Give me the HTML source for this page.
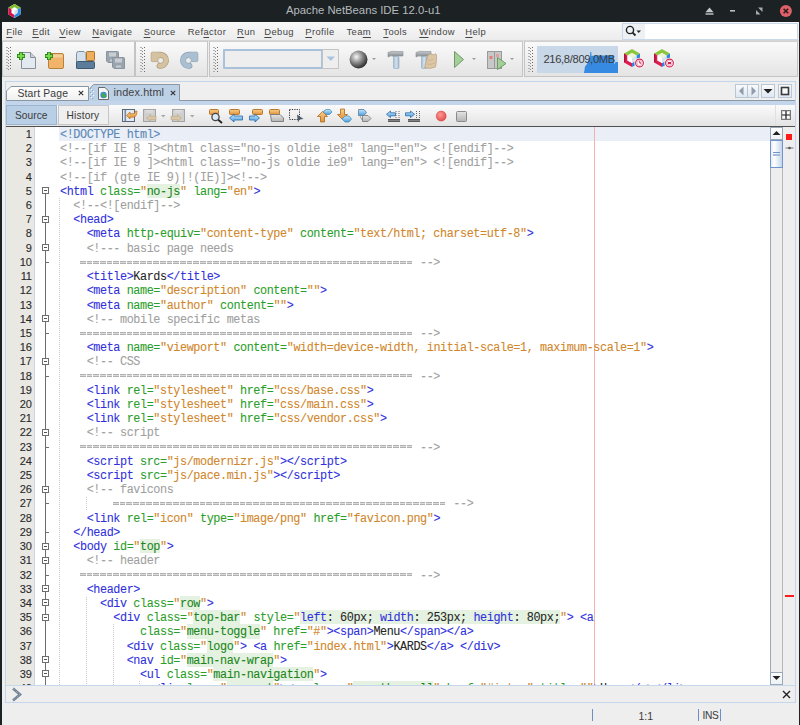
<!DOCTYPE html>
<html><head><meta charset="utf-8">
<style>
*{box-sizing:border-box}
html,body{margin:0;padding:0;width:800px;height:725px;overflow:hidden;background:#1c2124;font-family:"Liberation Sans",sans-serif}
.abs{position:absolute}
#win{position:absolute;left:2px;top:22px;width:797px;height:703px;background:#eeeeee}
#title{position:absolute;left:286px;top:4px;font-size:11.3px;color:#b5babe;white-space:pre;letter-spacing:0}
.menu{position:absolute;top:25.6px;font-size:9.4px;color:#444;white-space:pre;letter-spacing:0.38px}
.menu u{text-decoration:underline;text-decoration-thickness:1px;text-underline-offset:1.5px}
#menubar{position:absolute;left:2px;top:22px;width:797px;height:19px;background:linear-gradient(#f8f8f8,#ececec);border-bottom:1px solid #d6d6d6}
.tbg{position:absolute;top:41px;height:36px;background:linear-gradient(#fafafa,#e4e4e4);border:1px solid #c4c4c4;border-top-color:#d0d0d0}
.grip{position:absolute;width:5px;background-image:radial-gradient(circle at 4.5px 1.5px,#6a6a6a 0.75px,transparent 0.9px),radial-gradient(circle at 2.5px 3px,#8a8a8a 0.75px,transparent 0.9px),radial-gradient(circle at 0.8px 1.5px,#b0b0b0 0.7px,transparent 0.9px);background-size:5px 3px}
#edpanel{position:absolute;left:5px;top:81px;width:791px;height:622px;border:1px solid #c3d5e9;background:#efefef}
.code,.num{position:absolute;font-family:"Liberation Mono",monospace;font-size:11.8px;letter-spacing:-0.413px;white-space:pre;line-height:14px;height:14px}
.ln{position:absolute;left:60px;font-family:"Liberation Mono",monospace;font-size:11.8px;letter-spacing:-0.413px;white-space:pre;line-height:14px;height:14px;-webkit-text-stroke:0.08px;transform:translateY(1px) scaleY(1.04);transform-origin:0 10.25px}
.num{left:6px;width:25.6px;text-align:right;color:#2a2a2a;font-family:"Liberation Sans",sans-serif !important;font-size:11px !important;letter-spacing:-0.25px !important;-webkit-text-stroke:0.1px}
.t{color:#3030dc}
.a{color:#2a9e2a}
.v{color:#d0862a}
.c{color:#a0a0a0}
.k{color:#262626}
.d{color:#5a87b6}
.vh{color:#1a861a}
.ph{color:#3030dc}
.kh{color:#262626}
.hlb{position:absolute;height:14.21px;background:#e5f2e1}
.fb{position:absolute;left:42px;width:7px;height:7px;border:1px solid #6d6d6d;background:#fff}
.fb::after{content:"";position:absolute;left:1px;top:2px;width:3px;height:1px;background:#555}
.tick{position:absolute;left:45px;width:4px;height:1px;background:#6d6d6d}
.guide{position:absolute;width:1px;background-image:linear-gradient(#c8c8c8 50%,transparent 50%);background-size:1px 2px}
.eqb{position:absolute;width:332px;height:3px;background:repeating-linear-gradient(90deg,transparent 0 0.5px,rgba(255,255,255,0) 0.5px 5.5px,#fff 5.5px 6.6667px),linear-gradient(#b0b0b0 0 1px,#dcdcdc 1px 2px,#b0b0b0 2px 3px)}
.ui{position:absolute;font-size:10.5px;color:#3c3c3c;white-space:pre}
</style></head><body>
<!-- title bar -->
<svg class="abs" style="left:7px;top:3px" width="15" height="16" viewBox="0 0 15 16">
 <polygon points="7.5,1 13.5,4.5 13.5,11.5 7.5,15 1.5,11.5 1.5,4.5" fill="#fff"/>
 <polygon points="7.5,1 13.5,4.5 7.5,8 1.5,4.5" fill="#7cbd2e"/>
 <polygon points="1.5,4.5 7.5,8 7.5,15 1.5,11.5" fill="#d8104a"/>
 <polygon points="13.5,4.5 13.5,11.5 7.5,15 7.5,8" fill="#2a8ae2"/>
 <polygon points="7.5,4 10.5,6 10.5,10 7.5,12 4.5,10 4.5,6" fill="#fff"/>
 <polygon points="7.5,8 10.5,6 10.5,10 7.5,12" fill="#d0dce8"/>
</svg>
<div id="title">Apache NetBeans IDE 12.0-u1</div>
<svg class="abs" style="left:700px;top:0" width="100" height="22">
 <polygon points="709.5,7.5 713.5,12.3 705.5,12.3" transform="translate(-700,0)" fill="#c2c8c8"/>
 <rect x="5.5" y="13.3" width="8" height="1.4" fill="#c2c8c8"/>
 <rect x="30" y="10" width="5" height="1.6" fill="#b8bebe"/>
 <polygon points="56,14.5 56,10 60.5,14.5" fill="#a6acac"/>
 <polygon points="62.5,7.5 62.5,12 58,7.5" fill="#a6acac"/>
 <circle cx="85.9" cy="11" r="6" fill="#de6068"/>
 <path d="M83.6,8.7 L88.2,13.3 M88.2,8.7 L83.6,13.3" stroke="#2a1a1c" stroke-width="1.5"/>
</svg>
<div id="win"></div>
<!-- menubar -->
<div id="menubar"></div>
<div class="menu" style="left:6.3px"><u>F</u>ile</div>
<div class="menu" style="left:32.3px"><u>E</u>dit</div>
<div class="menu" style="left:59.3px"><u>V</u>iew</div>
<div class="menu" style="left:92.3px"><u>N</u>avigate</div>
<div class="menu" style="left:143.7px"><u>S</u>ource</div>
<div class="menu" style="left:187.7px">Ref<u>a</u>ctor</div>
<div class="menu" style="left:237.1px"><u>R</u>un</div>
<div class="menu" style="left:264.3px"><u>D</u>ebug</div>
<div class="menu" style="left:305.3px"><u>P</u>rofile</div>
<div class="menu" style="left:346.5px">Tea<u>m</u></div>
<div class="menu" style="left:383.3px"><u>T</u>ools</div>
<div class="menu" style="left:419.3px"><u>W</u>indow</div>
<div class="menu" style="left:465.3px"><u>H</u>elp</div>
<!-- search -->
<div class="abs" style="left:622px;top:23px;width:176px;height:17px;background:#fff;border:1px solid #c9d9ea"></div>
<div class="abs" style="left:623px;top:24px;width:22px;height:15px;background:#eef1f4"></div>
<svg class="abs" style="left:624px;top:24px" width="20" height="15">
 <circle cx="6" cy="6" r="3.6" fill="none" stroke="#222" stroke-width="1.4"/>
 <line x1="8.6" y1="8.6" x2="11.5" y2="11.5" stroke="#222" stroke-width="1.8"/>
 <polygon points="12.5,6.5 17,6.5 14.75,9" fill="#222"/>
</svg>
<!-- toolbar -->
<div class="tbg" style="left:2px;width:133px"></div>
<div class="tbg" style="left:135px;width:73px"></div>
<div class="tbg" style="left:209px;width:314px"></div>
<div class="tbg" style="left:524px;width:274px"></div>
<div class="grip" style="left:6px;top:46px;height:25px"></div>
<div class="grip" style="left:140px;top:46px;height:26px"></div>
<div class="grip" style="left:213px;top:46px;height:26px"></div>
<div class="grip" style="left:528px;top:46px;height:26px"></div>
<svg class="abs" style="left:16px;top:49px" width="115" height="22" viewBox="0 0 115 22">
 <!-- new file -->
 <path d="M5.5,3.5 H14.5 L19.5,8.5 V19.5 H5.5 Z" fill="#e3e9f0" stroke="#8b9098" stroke-width="1"/>
 <path d="M14.5,3.5 V8.5 H19.5" fill="#c9d2dc" stroke="#8b9098" stroke-width="1"/>
 <path d="M5,3 V11 M1,7 H9" stroke="#2a8a1a" stroke-width="4"/>
 <path d="M5,3.8 V10.2 M1.8,7 H8.2" stroke="#7ad84a" stroke-width="2"/>
 <!-- new project -->
 <rect x="32.5" y="4.5" width="15" height="15" rx="1.5" fill="#f1b46a" stroke="#b7803c"/>
 <rect x="33.5" y="5.5" width="13" height="3" fill="#f7cf9a"/>
 <path d="M33,3 V11 M29,7 H37" stroke="#2a8a1a" stroke-width="4"/>
 <path d="M33,3.8 V10.2 M29.8,7 H36.2" stroke="#7ad84a" stroke-width="2"/>
 <!-- open project -->
 <path d="M60.5,19.5 V4.5 Q60.5,2.5 62.5,2.5 H68 L70,4.5 V13 Z" fill="#d4e0ec" stroke="#7f90a2"/>
 <rect x="60.5" y="12.5" width="18" height="7" rx="1" fill="#5c7c9c" stroke="#3e5870"/>
 <rect x="70.5" y="2.5" width="8" height="9" rx="0.8" fill="#eeae5e" stroke="#a8742c"/>
 <!-- save all grayed -->
 <path d="M90.5,2.5 H101.5 Q102.5,2.5 102.5,3.5 V13.5 H92 L90.5,12 Z" fill="#9aa4ae" stroke="#8a949e"/>
 <rect x="93" y="3.5" width="7" height="4" fill="#c9cdd2"/>
 <rect x="94" y="10.5" width="5" height="2" fill="#c9cdd2"/>
 <path d="M96.5,8.5 H107.5 Q108.5,8.5 108.5,9.5 V19.5 H98 L96.5,18 Z" fill="#9aa4ae" stroke="#8a949e"/>
 <rect x="99" y="9.5" width="7" height="4" fill="#c9cdd2"/>
 <rect x="100" y="16.5" width="5" height="2" fill="#c9cdd2"/>
</svg>
<svg class="abs" style="left:148px;top:49px" width="55" height="22" viewBox="0 0 55 22">
 <rect x="3.20" y="3.20" width="9.1" height="9.4" rx="1.2" fill="#d4c2a0" stroke="#ae9a78" stroke-width="0.8"/>
 <path d="M12.50,5.80 A5.5,5.5 0 1 1 11.55,16.72" fill="none" stroke="#ae9a78" stroke-width="6" stroke-linecap="round"/>
 <rect x="3.60" y="3.60" width="8.3" height="8.6" rx="0.8" fill="#d4c2a0"/>
 <path d="M12.50,5.80 A5.5,5.5 0 1 1 11.55,16.72" fill="none" stroke="#d4c2a0" stroke-width="4.6" stroke-linecap="round"/>
 <circle cx="12.60" cy="11.40" r="2.9" fill="#ebebeb" stroke="#ae9a78" stroke-width="0.7"/>
 <rect x="40.70" y="3.20" width="9.1" height="9.4" rx="1.2" fill="#aac0d2" stroke="#8aa0b4" stroke-width="0.8"/>
 <path d="M40.50,5.80 A5.5,5.5 0 1 0 41.45,16.72" fill="none" stroke="#8aa0b4" stroke-width="6" stroke-linecap="round"/>
 <rect x="41.10" y="3.60" width="8.3" height="8.6" rx="0.8" fill="#aac0d2"/>
 <path d="M40.50,5.80 A5.5,5.5 0 1 0 41.45,16.72" fill="none" stroke="#aac0d2" stroke-width="4.6" stroke-linecap="round"/>
 <circle cx="40.40" cy="11.40" r="2.9" fill="#ebebeb" stroke="#8aa0b4" stroke-width="0.7"/>
</svg>
<div class="abs" style="left:223px;top:49px;width:100px;height:20px;background:#eeeeee;border:2px solid #a9c1da;border-radius:1px"></div>
<div class="abs" style="left:322px;top:49px;width:17px;height:20px;background:#eeeeee;border:1px solid #c4c4c4"></div>
<svg class="abs" style="left:326px;top:56px" width="10" height="6"><polygon points="0.5,0.5 9,0.5 4.75,5" fill="#a9c3dc"/></svg>
<svg class="abs" style="left:346px;top:48px" width="175" height="24" viewBox="0 0 175 24">
 <defs><radialGradient id="gl" cx="0.38" cy="0.35" r="0.65"><stop offset="0" stop-color="#f8f8f8"/><stop offset="0.5" stop-color="#8e8e8e"/><stop offset="1" stop-color="#303030"/></radialGradient></defs>
 <circle cx="12.5" cy="11.5" r="9" fill="url(#gl)"/>
 <path d="M26,10 h4 l-2,2 z" fill="#9a9a9a"/>
 <!-- hammer -->
 <defs><linearGradient id="hg" x1="0" y1="0" x2="0" y2="1"><stop offset="0" stop-color="#c8ccd0"/><stop offset="1" stop-color="#7e8488"/></linearGradient>
 <linearGradient id="hh" x1="0" y1="0" x2="1" y2="0"><stop offset="0" stop-color="#a6bed6"/><stop offset="0.5" stop-color="#d4e2ee"/><stop offset="1" stop-color="#9fb6cc"/></linearGradient></defs>
 <path d="M42,4.5 Q46,2.5 50,3.5 H57 V8 H51 L48,8.5 Q45,7 42,9 Z" fill="url(#hg)" stroke="#8a9094" stroke-width="0.6"/>
 <rect x="47.5" y="8.5" width="5.5" height="12" rx="1" fill="url(#hh)" stroke="#90a6bc" stroke-width="0.6"/>
 <!-- clean build -->
 <path d="M70,4.5 Q74,2.5 78,3.5 H85 V8 H79 L76,8.5 Q73,7 70,9 Z" fill="url(#hg)" stroke="#8a9094" stroke-width="0.6"/>
 <rect x="75.5" y="8.5" width="5.5" height="12" rx="1" fill="url(#hh)" stroke="#90a6bc" stroke-width="0.6"/>
 <path d="M82,7 Q85,5 88,7 L89.5,5.5 L90.5,7 Q91,13 89.5,19 Q84,21.5 78.5,19.5 Q80,14 82,7 Z" fill="#dcc6a6" stroke="#b8a080" stroke-width="0.7"/>
 <path d="M82,12 Q85,13 88,11 M81,16 Q85,17 89,15" stroke="#c4aa86" stroke-width="0.6" fill="none"/>
 <!-- run -->
 <path d="M108.5,3.5 L117.5,11.5 L108.5,19.5 Z" fill="#a4cf9a" stroke="#6f9a66" stroke-width="1"/>
 <path d="M126,10 h4 l-2,2 z" fill="#9a9a9a"/>
 <!-- debug -->
 <rect x="141.5" y="3.5" width="14" height="17" fill="#c8c8c8" stroke="#9a9a9a"/>
 <line x1="148.5" y1="4" x2="148.5" y2="20" stroke="#9a9a9a"/>
 <rect x="143.5" y="8" width="3" height="3" fill="#e0807a"/>
 <rect x="150" y="6" width="3" height="3" fill="#e0a0a0"/>
 <path d="M151.5,9.5 L160,15.5 L151.5,21.5 Z" fill="#a4cf9a" stroke="#6f9a66"/>
 <path d="M164,10 h4 l-2,2 z" fill="#9a9a9a"/>
</svg>
<div class="abs" style="left:537px;top:46px;width:81px;height:27px;background:#c8d8e8;overflow:hidden">
<svg class="abs" style="left:0;top:0" width="81" height="27"><path d="M47,27 L48,20.5 L50,18 L51.5,14 L53,11 L53.3,6 L54.3,6 L54.5,10 L56,9.7 L58,9.5 L76.8,9.5 L77.2,18.6 L78.5,16 L81,16 L81,27 Z" fill="#368ae2"/></svg>
</div>
<div class="abs" style="left:543.5px;top:53px;font-size:11.2px;color:#3c3c3c;white-space:pre;letter-spacing:-0.35px">216,8/809,0MB</div>
<svg class="abs" style="left:623px;top:48px" width="24" height="22" viewBox="0 0 24 22">
 <polygon points="9,1 17,5.5 17,14.5 9,19 1,14.5 1,5.5" fill="#fff"/>
 <polygon points="9,1 17,5.5 13.5,7.5 9,5 4.5,7.5 1,5.5" fill="#8cc63e"/>
 <polygon points="1,5.5 4.5,7.5 4.5,12.5 9,15 9,19 1,14.5" fill="#dc1f52"/>
 <polygon points="1,5.5 2.5,6.3 2.5,13.6 1,14.5" fill="#b0103a"/>
 <polygon points="17,5.5 17,14.5 9,19 9,15 13.5,12.5 13.5,7.5" fill="#2c86dc"/>
 <polygon points="4.5,7.5 9,5 13.5,7.5 9,10" fill="#eef4dc"/>
 <polygon points="4.5,7.5 9,10 9,15 4.5,12.5" fill="#ffffff"/>
 <polygon points="13.5,7.5 13.5,12.5 9,15 9,10" fill="#d6e2ec"/>
 <circle cx="16.5" cy="15" r="5.2" fill="#fff"/>
 <circle cx="16.5" cy="15" r="3.9" fill="#fff" stroke="#d42050" stroke-width="1.1"/>
 <circle cx="16.5" cy="15" r="2.6" fill="none" stroke="#e87090" stroke-width="0.6"/>
 <path d="M16.2,13.2 L17.6,15.6" stroke="#d42050" stroke-width="1.1" fill="none"/>
</svg>
<svg class="abs" style="left:653px;top:48px" width="24" height="22" viewBox="0 0 24 22">
 <polygon points="9,1 17,5.5 17,14.5 9,19 1,14.5 1,5.5" fill="#fff"/>
 <polygon points="9,1 17,5.5 13.5,7.5 9,5 4.5,7.5 1,5.5" fill="#8cc63e"/>
 <polygon points="1,5.5 4.5,7.5 4.5,12.5 9,15 9,19 1,14.5" fill="#dc1f52"/>
 <polygon points="1,5.5 2.5,6.3 2.5,13.6 1,14.5" fill="#b0103a"/>
 <polygon points="17,5.5 17,14.5 9,19 9,15 13.5,12.5 13.5,7.5" fill="#2c86dc"/>
 <polygon points="4.5,7.5 9,5 13.5,7.5 9,10" fill="#eef4dc"/>
 <polygon points="4.5,7.5 9,10 9,15 4.5,12.5" fill="#ffffff"/>
 <polygon points="13.5,7.5 13.5,12.5 9,15 9,10" fill="#d6e2ec"/>
 <circle cx="16.5" cy="15" r="5.2" fill="#fff"/>
 <circle cx="16.5" cy="15" r="3.9" fill="#fff" stroke="#d42050" stroke-width="1.1"/>
 <circle cx="16.5" cy="15" r="2.6" fill="none" stroke="#e87090" stroke-width="0.6"/>
 <rect x="15" y="14" width="3" height="2.2" fill="#d42050"/>
</svg>
<!-- editor panel -->
<div id="edpanel"></div>
<svg class="abs" style="left:5px;top:84px" width="800" height="22" viewBox="0 0 800 22">
 <defs><linearGradient id="tg" x1="0" y1="0" x2="0" y2="1"><stop offset="0" stop-color="#ffffff"/><stop offset="1" stop-color="#f0f0f0"/></linearGradient></defs>
 <path d="M1.5,16.5 V7 L6,2.5 H83.5 V16.5 Z" fill="url(#tg)" stroke="#8a96a2" stroke-width="1"/>
 <path d="M84,22 V5 L88.5,0.5 H175 V22 Z" fill="#bcd0e6"/>
 <path d="M84.5,5 L88.5,0.5 H174.5 V16.5 H790" fill="none" stroke="#8c98a4" stroke-width="1"/>
</svg>
<div class="ui" style="left:17.5px;top:87.5px;font-size:10.4px;color:#3a3a3a;letter-spacing:0.15px">Start Page</div>
<svg class="abs" style="left:77px;top:89px" width="8" height="8"><path d="M1.8,1.8 L6.2,6.2 M6.2,1.8 L1.8,6.2" stroke="#333" stroke-width="1.15"/></svg>
<svg class="abs" style="left:89px;top:87px" width="6" height="14"><g fill="#8aa2bc"><rect x="1" y="1" width="1" height="1"/><rect x="3" y="3" width="1" height="1"/><rect x="1" y="5" width="1" height="1"/><rect x="3" y="7" width="1" height="1"/><rect x="1" y="9" width="1" height="1"/><rect x="3" y="11" width="1" height="1"/></g><g fill="#f4f8fc"><rect x="2" y="2" width="1" height="1"/><rect x="4" y="4" width="1" height="1"/><rect x="2" y="6" width="1" height="1"/><rect x="4" y="8" width="1" height="1"/><rect x="2" y="10" width="1" height="1"/></g></svg>
<svg class="abs" style="left:97px;top:86px" width="13" height="15" viewBox="0 0 13 15">
 <path d="M1.5,1.5 H8 L11.5,5 V13.5 H1.5 Z" fill="#f4f6f8" stroke="#6a6a6a"/>
 <circle cx="6.5" cy="9" r="3.2" fill="#3b8fd0"/>
 <path d="M4.5,8 q2,-2 3,0 q1,2 2,1 v2 q-2,1 -4,0 z" fill="#4aa84a"/>
</svg>
<div class="ui" style="left:113.5px;top:85.6px;font-size:10.9px;color:#444;letter-spacing:0.1px">index.html</div>
<svg class="abs" style="left:169px;top:89px" width="8" height="8"><path d="M1.8,1.8 L6.2,6.2 M6.2,1.8 L1.8,6.2" stroke="#333" stroke-width="1.15"/></svg>
<svg class="abs" style="left:734px;top:83px" width="60" height="17" viewBox="0 0 60 17">
 <defs><linearGradient id="bg2" x1="0" y1="0" x2="0" y2="1"><stop offset="0" stop-color="#fbfbfb"/><stop offset="1" stop-color="#dde7f2"/></linearGradient></defs>
 <rect x="1.5" y="1.5" width="12" height="13" fill="url(#bg2)" stroke="#b9c6d4"/>
 <rect x="13.5" y="1.5" width="11" height="13" fill="url(#bg2)" stroke="#b9c6d4"/>
 <polygon points="9.5,3.5 9.5,12.5 5,8" fill="#8e9cab"/>
 <polygon points="17.5,3.5 17.5,12.5 22,8" fill="#8e9cab"/>
 <rect x="27.5" y="1.5" width="13" height="13" fill="url(#bg2)" stroke="#b9c6d4"/>
 <polygon points="29.5,6 38.5,6 34,10.5" fill="#222"/>
 <rect x="44.5" y="1.5" width="13" height="13" fill="url(#bg2)" stroke="#b9c6d4"/>
 <rect x="47.5" y="4.5" width="7" height="7" fill="#fafafa" stroke="#3a3a3a" stroke-width="1.6"/>
</svg>
<div class="abs" style="left:6px;top:101px;width:789px;height:4px;background:#c2d5ea"></div>
<div class="abs" style="left:6px;top:105px;width:789px;height:21px;background:linear-gradient(#fbfbfb,#e3e3e3)"></div>
<div class="abs" style="left:6px;top:105px;width:51px;height:20px;background:#b9cfe6;border:1px solid #9db5ce"></div>
<div class="abs" style="left:58px;top:105px;width:51px;height:20px;background:#efefef;border:1px solid #c6c6c6"></div>
<div class="ui" style="left:15px;top:109.5px;font-size:10.2px;color:#3a3a3a;letter-spacing:0.05px">Source</div>
<div class="ui" style="left:66.5px;top:109.5px;font-size:10.2px;color:#3a3a3a;letter-spacing:0.15px">History</div>
<div class="abs" style="left:775px;top:105px;width:1px;height:21px;background:#e0e0e0"></div>
<svg class="abs" style="left:781px;top:110px" width="11" height="10" viewBox="0 0 11 10">
 <rect x="0.5" y="0.5" width="9" height="9" fill="#d8d8d8" stroke="#777"/>
 <rect x="2" y="2" width="2.5" height="2.5" fill="#fff"/><rect x="5.5" y="2" width="2.5" height="2.5" fill="#fff"/>
 <rect x="2" y="5.5" width="2.5" height="2.5" fill="#fff"/><rect x="5.5" y="5.5" width="2.5" height="2.5" fill="#fff"/>
 <path d="M5,1 V9 M1,5 H9" stroke="#222" stroke-width="1.2"/>
</svg>
<svg class="abs" style="left:118px;top:104px" width="355" height="22" viewBox="118 104 355 22">
 <defs>
  <linearGradient id="og" x1="0" y1="0" x2="0" y2="1"><stop offset="0" stop-color="#f8cf8a"/><stop offset="1" stop-color="#e0903a"/></linearGradient>
  <linearGradient id="bgr" x1="0" y1="0" x2="0" y2="1"><stop offset="0" stop-color="#c6e6fb"/><stop offset="1" stop-color="#4a9ee0"/></linearGradient>
  <linearGradient id="gg" x1="0" y1="0" x2="0" y2="1"><stop offset="0" stop-color="#e4e4e4"/><stop offset="1" stop-color="#b4b4b4"/></linearGradient>
  <radialGradient id="rg" cx="0.4" cy="0.35" r="0.7"><stop offset="0" stop-color="#ff9a94"/><stop offset="1" stop-color="#e04a48"/></radialGradient>
 </defs>
 <!-- last edit -->
 <rect x="122.5" y="109.5" width="12" height="12" fill="#e2ebf5" stroke="#56687a"/>
 <rect x="124.5" y="110" width="1.6" height="11" fill="#7a8a9a"/>
 <path d="M126.5,115.5 L130,112 V113.8 H133 Q135.5,113.8 135.5,111 H137 Q137,117.2 133,117.2 H130 V119 Z" fill="url(#og)" stroke="#b86a18" stroke-width="0.7"/>
 <!-- back grayed -->
 <rect x="143.5" y="109.5" width="12" height="12" fill="#cfcfcf" stroke="#a4a4a4"/>
 <path d="M145.5,110.5 H153 M145.5,112 H153" stroke="#e6e6e6" stroke-width="0.8"/>
 <path d="M146.5,118 L150.5,114.5 V116.3 H156 V119.7 H150.5 V121.5 Z" fill="#d9c6a8" stroke="#bba888" stroke-width="0.6"/>
 <path d="M161,115 h4.5 l-2.25,2.5 z" fill="#a8a8a8"/>
 <!-- forward grayed -->
 <rect x="172.5" y="109.5" width="12" height="12" fill="#cfcfcf" stroke="#a4a4a4"/>
 <path d="M174.5,110.5 H182 M174.5,112 H182" stroke="#e6e6e6" stroke-width="0.8"/>
 <path d="M181.5,118 L177.5,114.5 V116.3 H171 V119.7 H177.5 V121.5 Z" fill="#d9c6a8" stroke="#bba888" stroke-width="0.6"/>
 <path d="M190,115 h4.5 l-2.25,2.5 z" fill="#a8a8a8"/>
 <!-- find -->
 <rect x="209.5" y="109.5" width="9" height="5" rx="1" fill="url(#og)" stroke="#b8782a"/>
 <circle cx="215.5" cy="117" r="3.6" fill="#dbe9f5" stroke="#444" stroke-width="1.3"/>
 <line x1="218.2" y1="119.7" x2="222" y2="123" stroke="#222" stroke-width="1.8"/>
 <!-- prev occ -->
 <rect x="229.5" y="109.5" width="10" height="5" rx="1" fill="url(#og)" stroke="#b8782a"/>
 <path d="M229.5,118 L234,114 V116 H242.5 V120 H234 V122 Z" fill="url(#bgr)" stroke="#2a6aa8" stroke-width="0.8"/>
 <!-- next occ -->
 <rect x="252.5" y="109.5" width="10" height="5" rx="1" fill="url(#og)" stroke="#b8782a"/>
 <path d="M259.5,118 L255,114 V116 H249.5 V120 H255 V122 Z" fill="url(#bgr)" stroke="#2a6aa8" stroke-width="0.8"/>
 <!-- toggle highlight -->
 <rect x="269.5" y="109.5" width="10" height="5" rx="1" fill="url(#og)" stroke="#b8782a"/>
 <path d="M270.5,114.5 H280 L283.5,118 V121.5 H271.5 Z" fill="url(#gg)" stroke="#777" stroke-width="0.9"/>
 <!-- dashed select -->
 <rect x="289.5" y="109.5" width="10" height="10" fill="none" stroke="#333" stroke-dasharray="1.2,1.2"/>
 <path d="M297,114.5 L303.5,119 L299.5,119.5 L298,122.5 Z" fill="#4a5a6a"/>
 <!-- up arrow + tag -->
 <path d="M322.5,112 L326,109.5 H330 L332,112 L329.5,114.5 H325 Z" fill="url(#bgr)" stroke="#3a8aaa" stroke-width="0.7"/>
 <path d="M317.5,116.5 L322.5,111.5 L327.5,116.5 H324.5 V122 H320.5 V116.5 Z" fill="url(#og)" stroke="#b06a1a" stroke-width="0.8"/>
 <!-- down arrow + tag -->
 <path d="M340.5,109 H344.5 V114.5 H347.5 L342.5,119.5 L337.5,114.5 H340.5 Z" fill="url(#og)" stroke="#b06a1a" stroke-width="0.8"/>
 <path d="M342,119 L345,116 H349 L351.5,119 L349,122 H345 Z" fill="url(#bgr)" stroke="#3a8aaa" stroke-width="0.7"/>
 <!-- gray tags -->
 <path d="M358.5,109.5 H364 L366.5,112.5 L364,115.5 H358.5 Z" fill="url(#bgr)" stroke="#5a7a9a" stroke-width="0.8"/>
 <path d="M362.5,115.5 H368 L371,118.5 L368,121.5 H362.5 Z" fill="url(#gg)" stroke="#777" stroke-width="0.8"/>
 <path d="M360,116 L362,120" stroke="#888" stroke-width="0.8"/>
 <!-- shift left -->
 <path d="M386.5,114.3 L390.5,111 V112.8 H395.5 V115.8 H390.5 V117.6 Z" fill="url(#bgr)" stroke="#2a6aa8" stroke-width="0.8"/>
 <path d="M396,111 V122 M399,111 V122" stroke="#6a6a6a" stroke-width="1" stroke-dasharray="1,1"/>
 <rect x="388" y="119" width="12" height="3" fill="#5a5a5a"/>
 <path d="M388,120.5 H400" stroke="#8a8a8a" stroke-width="0.8"/>
 <!-- shift right -->
 <path d="M414.5,114.3 L410.5,111 V112.8 H405.5 V115.8 H410.5 V117.6 Z" fill="url(#bgr)" stroke="#2a6aa8" stroke-width="0.8"/>
 <path d="M416.5,111 V122 M419.5,111 V122" stroke="#6a6a6a" stroke-width="1" stroke-dasharray="1,1"/>
 <rect x="408" y="119" width="12" height="3" fill="#5a5a5a"/>
 <path d="M408,120.5 H420" stroke="#8a8a8a" stroke-width="0.8"/>
 <!-- record -->
 <circle cx="441.2" cy="116.1" r="5" fill="url(#rg)" stroke="#d04040" stroke-width="0.5"/>
 <!-- stop -->
 <rect x="456.5" y="111.5" width="10" height="10" rx="1" fill="url(#gg)" stroke="#8a8a8a"/>
</svg>
<!-- editor -->
<div class="abs" style="left:6px;top:126px;width:789px;height:1px;background:#505050"></div>
<div class="abs" style="left:6px;top:127px;width:28px;height:559px;background:#e9e8e3"></div>
<div class="abs" style="left:34px;top:127px;width:1px;height:559px;background:#c3d6ea"></div>
<div class="abs" style="left:35px;top:127px;width:735px;height:559px;background:#fff;overflow:hidden">
</div>
<div class="abs" style="left:59px;top:127px;width:711px;height:14.2px;background:#e9eef7"></div>
<div class="abs" style="left:594px;top:127px;width:1px;height:559px;background:#f2b2ac"></div>
<div class="abs" style="left:45px;top:191px;width:1px;height:495px;background:#6d6d6d"></div>
<div class="guide" style="left:59px;top:198px;height:488px"></div>
<div class="guide" style="left:86px;top:497px;height:14px"></div>
<div class="guide" style="left:86px;top:597px;height:89px"></div>
<div class="guide" style="left:113px;top:624px;height:62px"></div>
<div class="guide" style="left:139px;top:681px;height:5px"></div>
<div class="abs" style="left:0;top:0;width:800px;height:685px;overflow:hidden;pointer-events:none">
<div class="fb" style="top:187.34px"></div>
<div class="fb" style="top:215.76px"></div>
<div class="fb" style="top:244.18px"></div>
<div class="fb" style="top:315.23px"></div>
<div class="fb" style="top:357.86px"></div>
<div class="fb" style="top:428.91px"></div>
<div class="fb" style="top:485.75px"></div>
<div class="fb" style="top:542.59px"></div>
<div class="fb" style="top:556.80px"></div>
<div class="fb" style="top:585.22px"></div>
<div class="fb" style="top:599.43px"></div>
<div class="fb" style="top:613.64px"></div>
<div class="fb" style="top:656.27px"></div>
<div class="fb" style="top:670.48px"></div>
<div class="tick" style="top:261.89px"></div>
<div class="tick" style="top:332.94px"></div>
<div class="tick" style="top:375.57px"></div>
<div class="tick" style="top:446.62px"></div>
<div class="tick" style="top:503.46px"></div>
<div class="tick" style="top:531.88px"></div>
<div class="tick" style="top:574.51px"></div>
<div class="num" style="top:127.00px">1</div>
<div class="num" style="top:141.21px">2</div>
<div class="num" style="top:155.42px">3</div>
<div class="num" style="top:169.63px">4</div>
<div class="num" style="top:183.84px">5</div>
<div class="num" style="top:198.05px">6</div>
<div class="num" style="top:212.26px">7</div>
<div class="num" style="top:226.47px">8</div>
<div class="num" style="top:240.68px">9</div>
<div class="num" style="top:254.89px">10</div>
<div class="num" style="top:269.10px">11</div>
<div class="num" style="top:283.31px">12</div>
<div class="num" style="top:297.52px">13</div>
<div class="num" style="top:311.73px">14</div>
<div class="num" style="top:325.94px">15</div>
<div class="num" style="top:340.15px">16</div>
<div class="num" style="top:354.36px">17</div>
<div class="num" style="top:368.57px">18</div>
<div class="num" style="top:382.78px">19</div>
<div class="num" style="top:396.99px">20</div>
<div class="num" style="top:411.20px">21</div>
<div class="num" style="top:425.41px">22</div>
<div class="num" style="top:439.62px">23</div>
<div class="num" style="top:453.83px">24</div>
<div class="num" style="top:468.04px">25</div>
<div class="num" style="top:482.25px">26</div>
<div class="num" style="top:496.46px">27</div>
<div class="num" style="top:510.67px">28</div>
<div class="num" style="top:524.88px">29</div>
<div class="num" style="top:539.09px">30</div>
<div class="num" style="top:553.30px">31</div>
<div class="num" style="top:567.51px">32</div>
<div class="num" style="top:581.72px">33</div>
<div class="num" style="top:595.93px">34</div>
<div class="num" style="top:610.14px">35</div>
<div class="num" style="top:624.35px">36</div>
<div class="num" style="top:638.56px">37</div>
<div class="num" style="top:652.77px">38</div>
<div class="num" style="top:666.98px">39</div>
<div class="num" style="top:681.19px">40</div>
<div class="hlb" style="left:146.67px;top:183.84px;width:33.33px"></div>
<div class="hlb" style="left:140.00px;top:539.09px;width:20.00px"></div>
<div class="hlb" style="left:180.00px;top:595.93px;width:20.00px"></div>
<div class="hlb" style="left:193.33px;top:610.14px;width:46.67px"></div>
<div class="hlb" style="left:300.00px;top:610.14px;width:260.00px"></div>
<div class="hlb" style="left:186.67px;top:624.35px;width:73.33px"></div>
<div class="hlb" style="left:206.67px;top:638.56px;width:26.67px"></div>
<div class="hlb" style="left:186.67px;top:652.77px;width:86.67px"></div>
<div class="hlb" style="left:213.33px;top:666.98px;width:100.00px"></div>
<div class="hlb" style="left:226.67px;top:681.19px;width:46.67px"></div>
<div class="hlb" style="left:353.33px;top:681.19px;width:80.00px"></div>
<div class="eqb" style="left:80.00px;top:261px"></div>
<div class="eqb" style="left:80.00px;top:332px"></div>
<div class="eqb" style="left:80.00px;top:374px"></div>
<div class="eqb" style="left:80.00px;top:445px"></div>
<div class="eqb" style="left:113.33px;top:502px"></div>
<div class="eqb" style="left:80.00px;top:573px"></div>
<div class="ln" style="top:127.00px"><span class="d">&lt;!DOCTYPE html&gt;</span></div>
<div class="ln" style="top:141.21px"><span class="c">&lt;!--[if IE 8 ]&gt;&lt;html class="no-js oldie ie8" lang="en"&gt; &lt;![endif]--&gt;</span></div>
<div class="ln" style="top:155.42px"><span class="c">&lt;!--[if IE 9 ]&gt;&lt;html class="no-js oldie ie9" lang="en"&gt; &lt;![endif]--&gt;</span></div>
<div class="ln" style="top:169.63px"><span class="c">&lt;!--[if (gte IE 9)|!(IE)]&gt;&lt;!--&gt;</span></div>
<div class="ln" style="top:183.84px"><span class="t">&lt;html</span><span class="k"> </span><span class="a">class=</span><span class="v">"</span><span class="vh">no-js</span><span class="v">"</span><span class="k"> </span><span class="a">lang=</span><span class="v">"en"</span><span class="t">&gt;</span></div>
<div class="ln" style="top:198.05px">  <span class="c">&lt;!--&lt;![endif]--&gt;</span></div>
<div class="ln" style="top:212.26px">  <span class="t">&lt;head&gt;</span></div>
<div class="ln" style="top:226.47px">    <span class="t">&lt;meta</span><span class="k"> </span><span class="a">http-equiv=</span><span class="v">"content-type"</span><span class="k"> </span><span class="a">content=</span><span class="v">"text/html; charset=utf-8"</span><span class="t">&gt;</span></div>
<div class="ln" style="top:240.68px">    <span class="c">&lt;!--- basic page needs</span></div>
<div class="ln" style="top:254.89px">                                                     <span class="c"> --&gt;</span></div>
<div class="ln" style="top:269.10px">    <span class="t">&lt;title&gt;</span><span class="k">Kards</span><span class="t">&lt;/title&gt;</span></div>
<div class="ln" style="top:283.31px">    <span class="t">&lt;meta</span><span class="k"> </span><span class="a">name=</span><span class="v">"description"</span><span class="k"> </span><span class="a">content=</span><span class="v">""</span><span class="t">&gt;</span></div>
<div class="ln" style="top:297.52px">    <span class="t">&lt;meta</span><span class="k"> </span><span class="a">name=</span><span class="v">"author"</span><span class="k"> </span><span class="a">content=</span><span class="v">""</span><span class="t">&gt;</span></div>
<div class="ln" style="top:311.73px">    <span class="c">&lt;!-- mobile specific metas</span></div>
<div class="ln" style="top:325.94px">                                                     <span class="c"> --&gt;</span></div>
<div class="ln" style="top:340.15px">    <span class="t">&lt;meta</span><span class="k"> </span><span class="a">name=</span><span class="v">"viewport"</span><span class="k"> </span><span class="a">content=</span><span class="v">"width=device-width, initial-scale=1, maximum-scale=1"</span><span class="t">&gt;</span></div>
<div class="ln" style="top:354.36px">    <span class="c">&lt;!-- CSS</span></div>
<div class="ln" style="top:368.57px">                                                     <span class="c"> --&gt;</span></div>
<div class="ln" style="top:382.78px">    <span class="t">&lt;link</span><span class="k"> </span><span class="a">rel=</span><span class="v">"stylesheet"</span><span class="k"> </span><span class="a">href=</span><span class="v">"css/base.css"</span><span class="t">&gt;</span></div>
<div class="ln" style="top:396.99px">    <span class="t">&lt;link</span><span class="k"> </span><span class="a">rel=</span><span class="v">"stylesheet"</span><span class="k"> </span><span class="a">href=</span><span class="v">"css/main.css"</span><span class="t">&gt;</span></div>
<div class="ln" style="top:411.20px">    <span class="t">&lt;link</span><span class="k"> </span><span class="a">rel=</span><span class="v">"stylesheet"</span><span class="k"> </span><span class="a">href=</span><span class="v">"css/vendor.css"</span><span class="t">&gt;</span></div>
<div class="ln" style="top:425.41px">    <span class="c">&lt;!-- script</span></div>
<div class="ln" style="top:439.62px">                                                     <span class="c"> --&gt;</span></div>
<div class="ln" style="top:453.83px">    <span class="t">&lt;script</span><span class="k"> </span><span class="a">src=</span><span class="v">"js/modernizr.js"</span><span class="t">&gt;&lt;/script&gt;</span></div>
<div class="ln" style="top:468.04px">    <span class="t">&lt;script</span><span class="k"> </span><span class="a">src=</span><span class="v">"js/pace.min.js"</span><span class="t">&gt;&lt;/script&gt;</span></div>
<div class="ln" style="top:482.25px">    <span class="c">&lt;!-- favicons</span></div>
<div class="ln" style="top:496.46px">                                                          <span class="c"> --&gt;</span></div>
<div class="ln" style="top:510.67px">    <span class="t">&lt;link</span><span class="k"> </span><span class="a">rel=</span><span class="v">"icon"</span><span class="k"> </span><span class="a">type=</span><span class="v">"image/png"</span><span class="k"> </span><span class="a">href=</span><span class="v">"favicon.png"</span><span class="t">&gt;</span></div>
<div class="ln" style="top:524.88px">  <span class="t">&lt;/head&gt;</span></div>
<div class="ln" style="top:539.09px">  <span class="t">&lt;body</span><span class="k"> </span><span class="a">id=</span><span class="v">"</span><span class="vh">top</span><span class="v">"</span><span class="t">&gt;</span></div>
<div class="ln" style="top:553.30px">    <span class="c">&lt;!-- header</span></div>
<div class="ln" style="top:567.51px">                                                     <span class="c"> --&gt;</span></div>
<div class="ln" style="top:581.72px">    <span class="t">&lt;header&gt;</span></div>
<div class="ln" style="top:595.93px">      <span class="t">&lt;div</span><span class="k"> </span><span class="a">class=</span><span class="v">"</span><span class="vh">row</span><span class="v">"</span><span class="t">&gt;</span></div>
<div class="ln" style="top:610.14px">        <span class="t">&lt;div</span><span class="k"> </span><span class="a">class=</span><span class="v">"</span><span class="vh">top-bar</span><span class="v">"</span><span class="k"> </span><span class="a">style=</span><span class="v">"</span><span class="ph">left</span><span class="kh">: 60px; </span><span class="ph">width</span><span class="kh">: 253px; </span><span class="ph">height</span><span class="kh">: 80px;</span><span class="v">"</span><span class="t">&gt;</span><span class="k"> </span><span class="t">&lt;a</span></div>
<div class="ln" style="top:624.35px">            <span class="a">class=</span><span class="v">"</span><span class="vh">menu-toggle</span><span class="v">"</span><span class="k"> </span><span class="a">href=</span><span class="v">"#"</span><span class="t">&gt;&lt;span&gt;</span><span class="k">Menu</span><span class="t">&lt;/span&gt;&lt;/a&gt;</span></div>
<div class="ln" style="top:638.56px">          <span class="t">&lt;div</span><span class="k"> </span><span class="a">class=</span><span class="v">"</span><span class="vh">logo</span><span class="v">"</span><span class="t">&gt;</span><span class="k"> </span><span class="t">&lt;a</span><span class="k"> </span><span class="a">href=</span><span class="v">"index.html"</span><span class="t">&gt;</span><span class="k">KARDS</span><span class="t">&lt;/a&gt;</span><span class="k"> </span><span class="t">&lt;/div&gt;</span></div>
<div class="ln" style="top:652.77px">          <span class="t">&lt;nav</span><span class="k"> </span><span class="a">id=</span><span class="v">"</span><span class="vh">main-nav-wrap</span><span class="v">"</span><span class="t">&gt;</span></div>
<div class="ln" style="top:666.98px">            <span class="t">&lt;ul</span><span class="k"> </span><span class="a">class=</span><span class="v">"</span><span class="vh">main-navigation</span><span class="v">"</span><span class="t">&gt;</span></div>
<div class="ln" style="top:681.19px">              <span class="t">&lt;li</span><span class="k"> </span><span class="a">class=</span><span class="v">"</span><span class="vh">current</span><span class="v">"</span><span class="t">&gt;&lt;a</span><span class="k"> </span><span class="a">class=</span><span class="v">"</span><span class="vh">smoothscroll</span><span class="v">"</span><span class="k"> </span><span class="a">href=</span><span class="v">"#intro"</span><span class="k"> </span><span class="a">title=</span><span class="v">""</span><span class="t">&gt;</span><span class="k">Home</span><span class="t">&lt;/a&gt;&lt;/li&gt;</span></div>
</div>
<!-- scrollbar -->
<div class="abs" style="left:770px;top:127px;width:13px;height:559px;background:#eeeeee;border-left:1px solid #9aa9b8;border-right:1px solid #b5b5b5"></div>
<div class="abs" style="left:770px;top:127px;width:13px;height:13px;background:linear-gradient(#fdfdfd,#eef2f6);border:1px solid #9aa9b8"></div>
<svg class="abs" style="left:772px;top:130px" width="9" height="6"><polygon points="0.5,5 8.5,5 4.5,1" fill="#222"/></svg>
<div class="abs" style="left:770px;top:139.5px;width:13px;height:28px;background:linear-gradient(90deg,#e6eef8,#ffffff 30%,#c4d6ea);border:1.3px solid #6f95cc"></div>
<div class="abs" style="left:773px;top:152px;width:7px;height:1px;background:#6f95cc"></div>
<div class="abs" style="left:773px;top:154px;width:7px;height:1.5px;background:#a7bbd7"></div>
<div class="abs" style="left:770px;top:671.5px;width:13px;height:13.5px;background:linear-gradient(#fdfdfd,#eef2f6);border:1px solid #9aa9b8"></div>
<svg class="abs" style="left:772px;top:675px" width="9" height="6"><polygon points="0.5,1 8.5,1 4.5,5" fill="#222"/></svg>
<div class="abs" style="left:783px;top:127px;width:12px;height:559px;background:#eeeeee"></div>
<div class="abs" style="left:786px;top:133.5px;width:6px;height:6px;background:#ff1a1a"></div>
<svg class="abs" style="left:785px;top:144.5px" width="9" height="6"><path d="M0.5,3 H8.5" stroke="#555" stroke-width="0.8"/><circle cx="4.5" cy="3" r="1.3" fill="#555"/></svg>
<div class="abs" style="left:785px;top:595px;width:9px;height:2px;background:#ff1a1a"></div>
<!-- bottom panel -->
<div class="abs" style="left:6px;top:685px;width:789px;height:18px;background:#eeeeee;border-top:1px solid #c5d7ea;border-bottom:1px solid #c5d7ea"></div>
<svg class="abs" style="left:11px;top:687px" width="12" height="15"><path d="M2,1.5 L9,7.5 L2,13.5" fill="none" stroke="#6f7f92" stroke-width="2.6"/><path d="M2,1.5 L9,7.5 L2,13.5" fill="none" stroke="#a8b8c8" stroke-width="1" stroke-dasharray="1,1"/></svg>
<svg class="abs" style="left:782px;top:690px" width="10" height="10"><path d="M1,1 L8,8 M8,1 L1,8" stroke="#222" stroke-width="1.4"/></svg>
<div class="abs" style="left:592px;top:709px;width:1.2px;height:12px;background:#6d8ec8"></div>
<div class="abs" style="left:698px;top:709px;width:1.2px;height:12px;background:#6d8ec8"></div>
<div class="abs" style="left:720px;top:709px;width:1.2px;height:12px;background:#6d8ec8"></div>
<div class="ui" style="left:638.5px;top:710px;font-size:10.5px;color:#3a3a3a">1:1</div>
<div class="ui" style="left:702.5px;top:710px;font-size:10.2px;color:#3a3a3a;letter-spacing:-0.4px">INS</div>
</body></html>
